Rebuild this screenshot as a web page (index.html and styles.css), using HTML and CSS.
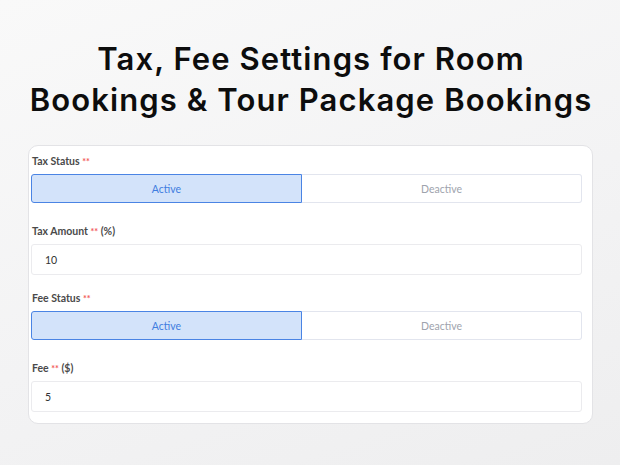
FILE: index.html
```html
<!DOCTYPE html>
<html lang="en">
<head>
<meta charset="utf-8">
<title>Tax, Fee Settings</title>
<link rel="stylesheet" href="styles.css">
</head>
<body>
<div class="page">
  <h1 class="title">Tax, Fee Settings for Room<br>Bookings &amp; Tour Package Bookings</h1>
  <div class="card">
    <div class="field field-toggle">
      <div class="label">Tax Status <span class="req">**</span></div>
      <div class="toggle">
        <div class="opt opt-active">Active</div>
        <div class="opt opt-off">Deactive</div>
      </div>
    </div>
    <div class="field field-input">
      <div class="label">Tax Amount <span class="req">**</span> (%)</div>
      <div class="input">10</div>
    </div>
    <div class="field field-toggle">
      <div class="label">Fee Status <span class="req">**</span></div>
      <div class="toggle">
        <div class="opt opt-active">Active</div>
        <div class="opt opt-off">Deactive</div>
      </div>
    </div>
    <div class="field field-last">
      <div class="label">Fee <span class="req">**</span> ($)</div>
      <div class="input">5</div>
    </div>
  </div>
</div>
</body>
</html>
```

FILE: styles.css
```css
html, body {
  margin: 0;
  padding: 0;
}
body {
  width: 620px;
  height: 465px;
  overflow: hidden;
  background: linear-gradient(160deg, #f9f9f9 0%, #f3f3f4 55%, #eeeeef 100%);
  font-family: "Lato", "Liberation Sans", sans-serif;
}
.page {
  display: flex;
  flex-direction: column;
  padding-top: 38px;
}
.title {
  margin: 0;
  padding-left: 2px;
  font-family: "Inter", "Liberation Sans", sans-serif;
  font-weight: 600;
  font-size: 31px;
  line-height: 41px;
  letter-spacing: 1.1px;
  color: #0d0d0d;
  text-align: center;
}
.card {
  margin-top: 25px;
  margin-left: 28px;
  width: 565px;
  box-sizing: border-box;
  background: #ffffff;
  border: 1px solid #e3e3e6;
  border-radius: 10px;
  padding: 7px 10px 11px 2px;
}
.label {
  height: 16px;
  line-height: 16px;
  font-size: 10.5px;
  font-weight: 700;
  color: #4a4a4a;
  padding-left: 1px;
  margin-bottom: 5px;
}
.req {
  color: #f25a5a;
  font-size: 9px;
}
.field-toggle {
  margin-bottom: 20px;
}
.field-input {
  margin-bottom: 15px;
}
.toggle {
  display: flex;
  height: 29px;
}
.opt {
  box-sizing: border-box;
  display: flex;
  align-items: center;
  justify-content: center;
  font-size: 10.5px;
}
.opt-active {
  flex: 0 0 271px;
  background: #d3e3fa;
  border: 1px solid #4a84e4;
  border-radius: 3px 0 0 3px;
  color: #3f7de0;
}
.opt-off {
  flex: 1;
  background: #ffffff;
  border: 1px solid #e2e5ee;
  border-left: none;
  border-radius: 0 3px 3px 0;
  color: #9ea3ad;
}
.input {
  box-sizing: border-box;
  height: 31px;
  border: 1px solid #ebebee;
  border-radius: 3px;
  padding-left: 13px;
  display: flex;
  align-items: center;
  font-size: 10.5px;
  color: #333333;
}
```
